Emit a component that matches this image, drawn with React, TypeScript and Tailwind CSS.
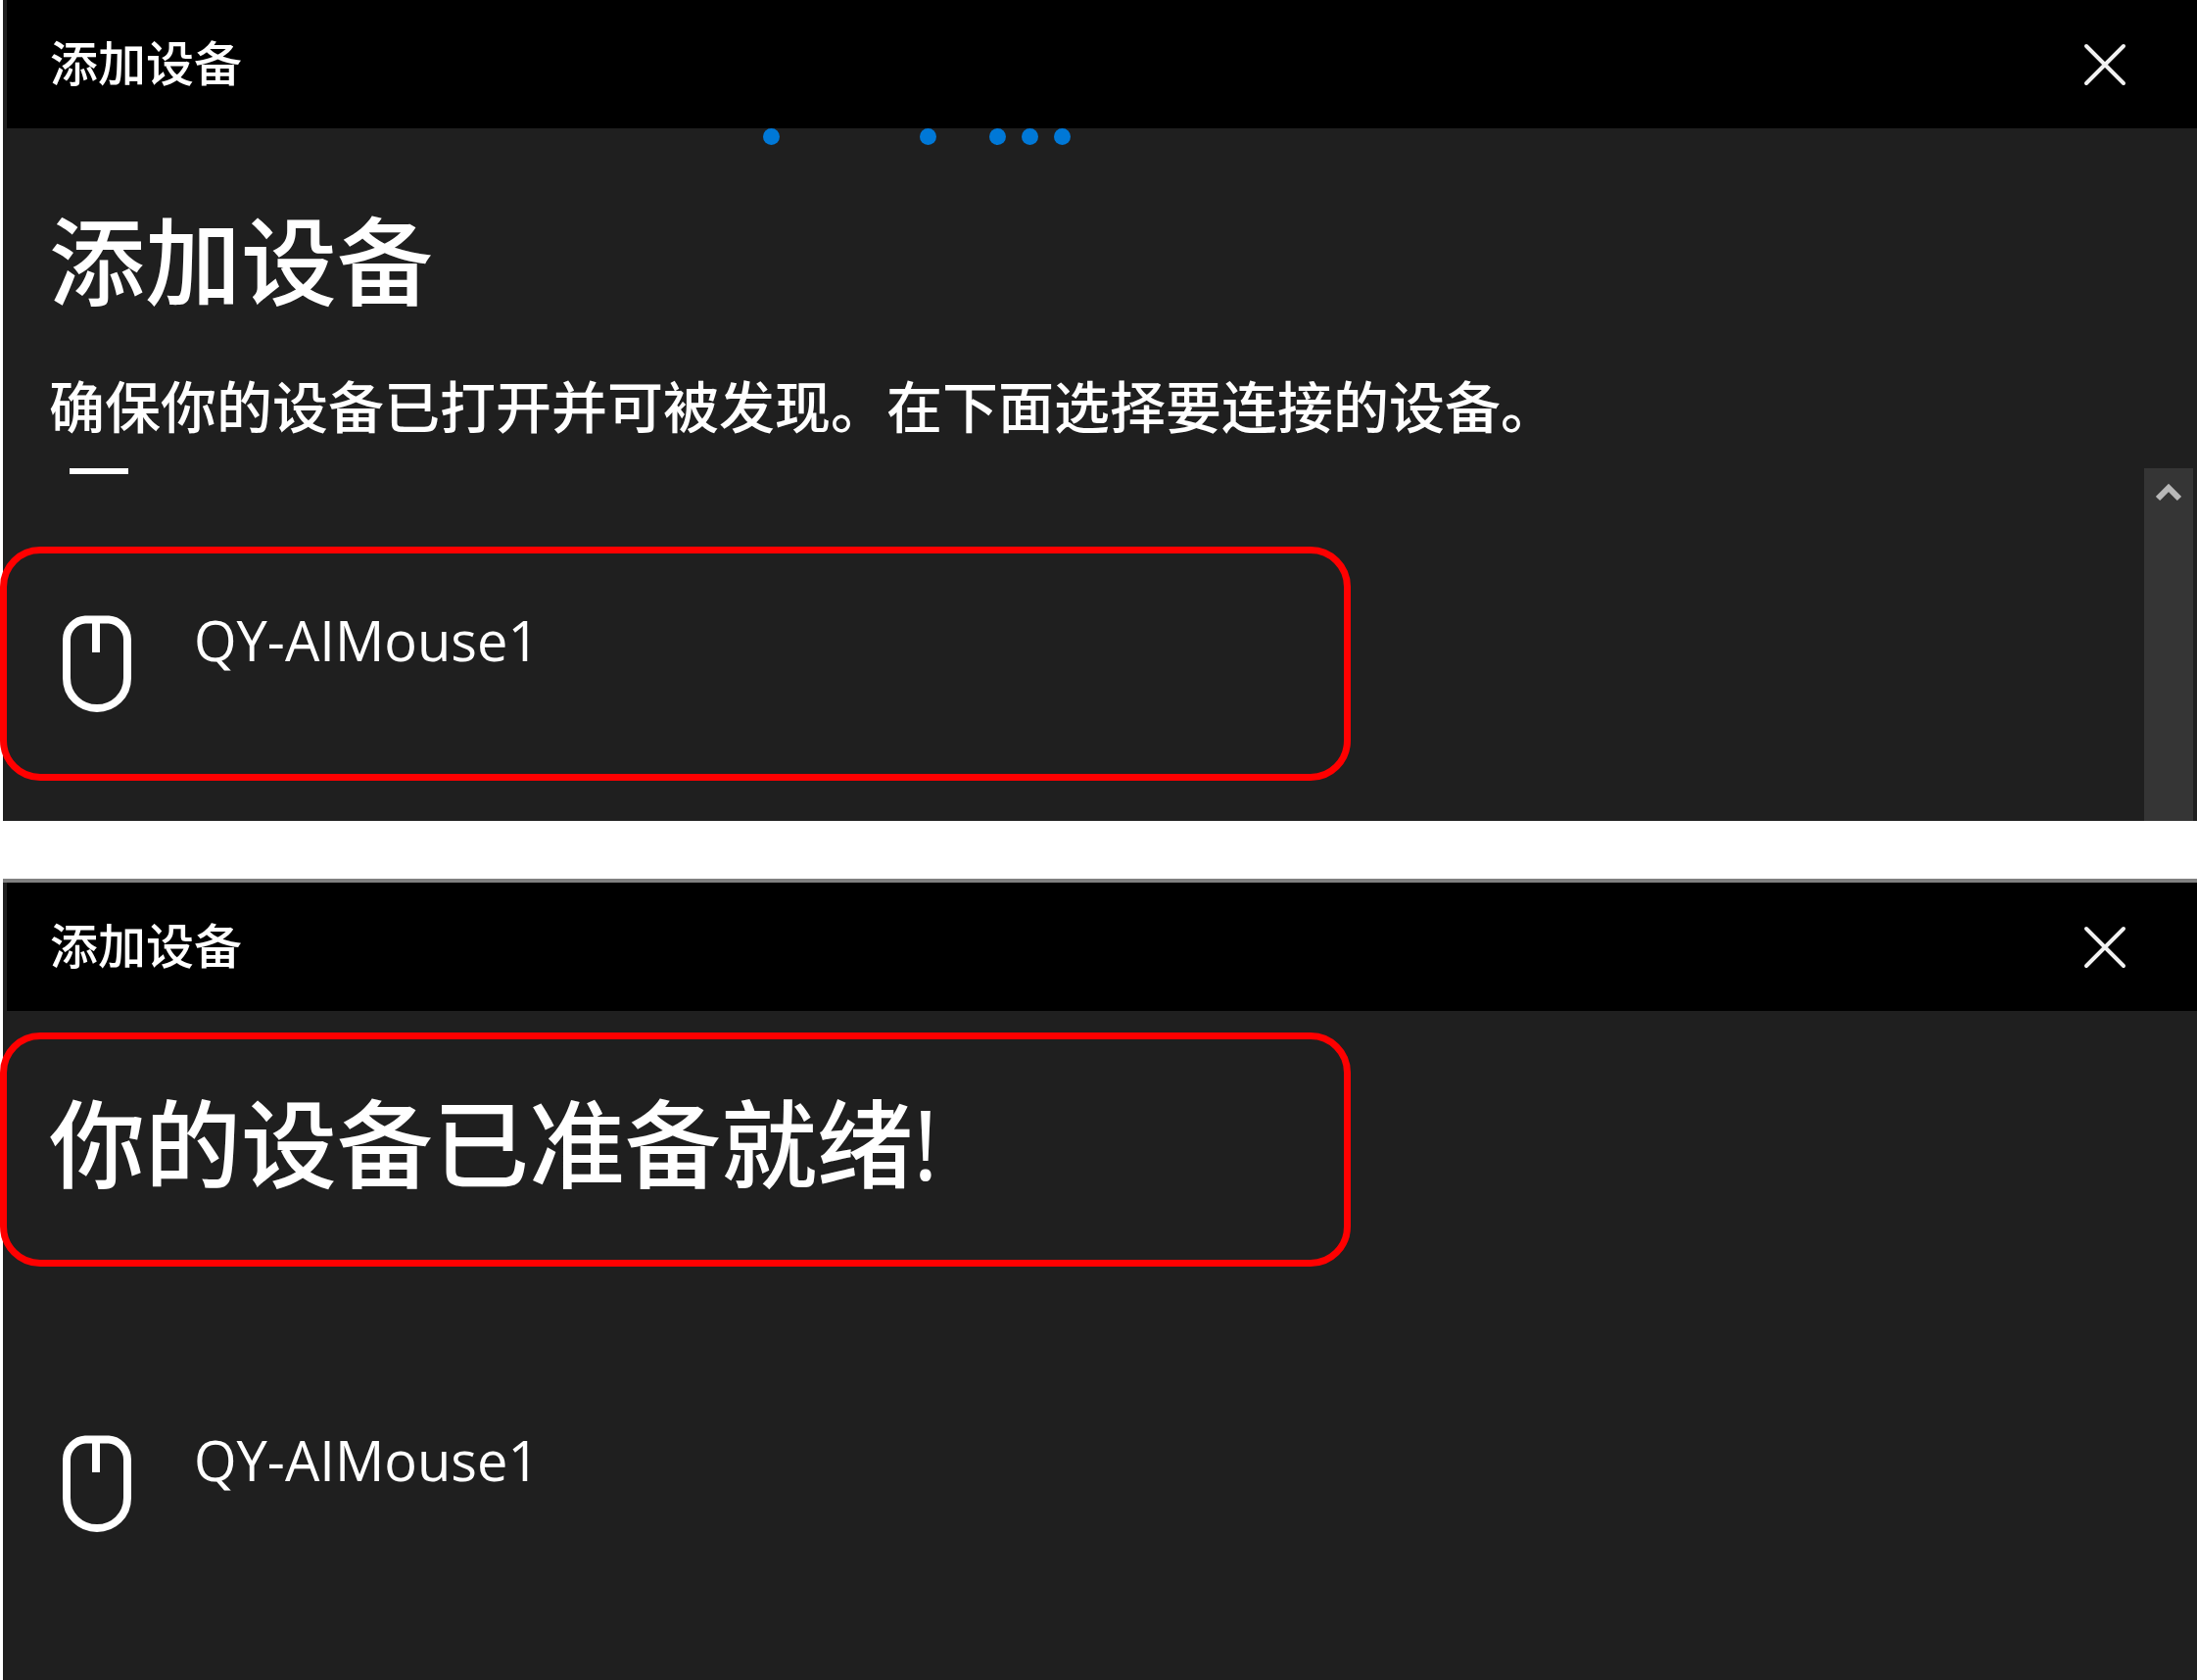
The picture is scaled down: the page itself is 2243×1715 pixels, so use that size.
import type { ReactNode } from "react";

function CloseIcon() {
  return (
    <svg viewBox="0 0 44 44" className="h-11 w-11" fill="none" stroke="#f2f2f2" strokeWidth="4" strokeLinecap="round">
      <path d="M3 3 41 41M41 3 3 41" />
    </svg>
  );
}

function MouseIcon() {
  return (
    <svg viewBox="0 0 72 100" className="h-[100px] w-[72px] shrink-0" fill="none" stroke="#fff" strokeWidth="8">
      <path d="M24 4.500H48C58 5 67 14 67 25V64C67 82 53 95 36 95S5 82 5 64V25C5 14 14 5 24 4.500Z" />
      <path d="M35 4V38" />
    </svg>
  );
}

function Panel({ className, children }: { className?: string; children: ReactNode }) {
  return (
    <section className={`ml-[3px] flex flex-col bg-[#1f1f1f] text-white ${className ?? ""}`}>
      <header className="ml-1 flex h-[131px] items-center justify-between bg-black pl-11 pr-[72px]">
        <span className="pb-1 text-[49px] font-medium leading-[64px]">添加设备</span>
        <button type="button" aria-label="关闭">
          <CloseIcon />
        </button>
      </header>
      {children}
    </section>
  );
}

function Highlight({ children }: { children?: ReactNode }) {
  return (
    <div className="-ml-[3px] h-[239px] w-[1379px] max-w-full rounded-[41px] border-[7px] border-[#ff0000]">
      {children}
    </div>
  );
}

function Device({ name }: { name: string }) {
  return (
    <div className="flex items-start gap-[63px]">
      <div className="pt-3">
        <MouseIcon />
      </div>
      <span className="text-[56px] leading-[74px]">{name}</span>
    </div>
  );
}

function Dot() {
  return <span className="h-[17px] w-[17px] rounded-full bg-[#0078d7]" />;
}

// indeterminate progress bar, frozen mid-sweep
function ProgressDots() {
  return (
    <div className="flex h-[17px] gap-4 pl-[776px]">
      <span className="mr-[127px] flex">
        <Dot />
      </span>
      <span className="mr-[38px] flex">
        <Dot />
      </span>
      <Dot />
      <Dot />
      <Dot />
    </div>
  );
}

export default function App() {
  return (
    <main className="flex min-h-screen flex-col bg-white font-['Open_Sans','Noto_Sans_CJK_SC',sans-serif]" lang="zh-CN">
      <Panel>
        <ProgressDots />
        <h1 className="mt-[58px] pl-[47px] text-[98px] font-medium leading-[120px]">添加设备</h1>
        <p className="mt-[53px] pl-[47px] text-[57px] font-medium leading-[72px]">
          确保你的设备已打开并可被发现。在下面选择要连接的设备。
        </p>
        <div className="mt-[27px] flex h-[360px] justify-between">
          <div className="flex-1">
            <div className="ml-[68px] h-1.5 w-[60px] bg-white" />
            <div className="mt-[74px]">
              <Highlight>
                <div className="pl-14 pt-[51px]">
                  <Device name="QY-AIMouse1" />
                </div>
              </Highlight>
            </div>
          </div>
          <div className="mr-1 flex w-[50px] justify-center bg-[#353535] pt-[15px]">
            <button type="button" aria-label="向上滚动" className="h-5">
              <svg viewBox="0 0 26 20" className="h-5 w-[26px]" fill="none" stroke="#b8b8b8" strokeWidth="6">
                <path d="M2 16 13 5 24 16" />
              </svg>
            </button>
          </div>
        </div>
      </Panel>

      <Panel className="mt-[59px] flex-1 border-t-4 border-[#808080]">
        <div className="mt-[22px]">
          <Highlight>
            <h2 className="pl-[43px] pt-[46px] text-[98px] font-medium leading-[120px]">你的设备已准备就绪!</h2>
          </Highlight>
        </div>
        <div className="mt-40 pl-[60px]">
          <Device name="QY-AIMouse1" />
        </div>
      </Panel>
    </main>
  );
}
